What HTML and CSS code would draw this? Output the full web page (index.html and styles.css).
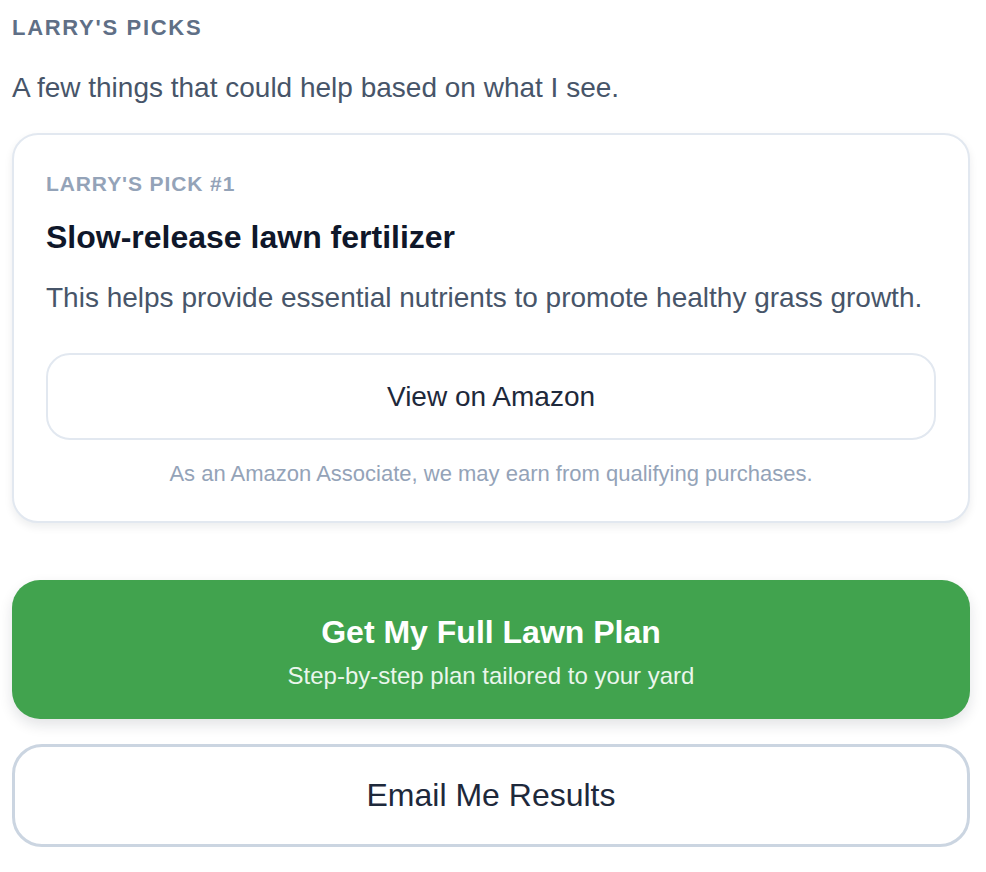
FILE: index.html
```html
<!DOCTYPE html>
<html lang="en">
<head>
<meta charset="utf-8">
<title>Larry's Picks</title>
<link rel="stylesheet" href="styles.css">
</head>
<body>
<main class="page">
  <h2 class="section-label">LARRY'S PICKS</h2>
  <p class="intro">A few things that could help based on what I see.</p>

  <section class="pick-card">
    <div class="pick-label">LARRY'S PICK #1</div>
    <h3 class="pick-title">Slow-release lawn fertilizer</h3>
    <p class="pick-desc">This helps provide essential nutrients to promote healthy grass growth.</p>
    <a class="amazon-btn" href="#">View on Amazon</a>
    <p class="disclaimer">As an Amazon Associate, we may earn from qualifying purchases.</p>
  </section>

  <a class="plan-btn" href="#">
    <span class="plan-title">Get My Full Lawn Plan</span>
    <span class="plan-sub">Step-by-step plan tailored to your yard</span>
  </a>

  <a class="email-btn" href="#">Email Me Results</a>
</main>
</body>
</html>
```

FILE: styles.css
```css
* { box-sizing: border-box; }

html, body {
  margin: 0;
  padding: 0;
  background: #ffffff;
}

body {
  font-family: "Liberation Sans", Arial, Helvetica, sans-serif;
  color: #1e293b;
}

.page {
  display: flex;
  flex-direction: column;
  padding: 14px 16px 20px 12px;
}

.section-label {
  margin: 0;
  font-size: 22px;
  line-height: 28px;
  font-weight: 700;
  letter-spacing: 1.7px;
  color: #5f6f86;
}

.intro {
  margin: 28px 0 0 0;
  font-size: 28px;
  line-height: 36px;
  color: #475569;
}

.pick-card {
  margin-top: 27px;
  border: 2px solid #e2e8f0;
  border-radius: 26px;
  background: #fff;
  box-shadow: 0 4px 8px rgba(15, 23, 42, 0.08);
  padding: 35px 32px 33px 32px;
  display: flex;
  flex-direction: column;
}

.pick-label {
  font-size: 21px;
  line-height: 28px;
  font-weight: 700;
  letter-spacing: 0.9px;
  color: #94a3b8;
}

.pick-title {
  margin: 19px 0 0 0;
  font-size: 32px;
  line-height: 40px;
  font-weight: 700;
  color: #0f172a;
}

.pick-desc {
  margin: 23px 0 0 0;
  font-size: 28px;
  line-height: 36px;
  color: #475569;
}

.amazon-btn {
  margin-top: 37px;
  height: 87px;
  border: 2px solid #e2e8f0;
  border-radius: 24px;
  display: flex;
  align-items: center;
  justify-content: center;
  font-size: 28px;
  color: #1e293b;
  text-decoration: none;
}

.disclaimer {
  margin: 20px 0 0 0;
  text-align: center;
  font-size: 22px;
  line-height: 28px;
  color: #94a3b8;
}

.plan-btn {
  margin-top: 57px;
  padding: 32px 0 28px 0;
  border-radius: 28px;
  background: #41a34e;
  box-shadow: 0 6px 14px rgba(15, 23, 42, 0.12);
  display: flex;
  flex-direction: column;
  align-items: center;
  gap: 9px;
  text-decoration: none;
  color: #fff;
}

.plan-title {
  font-size: 32px;
  line-height: 40px;
  font-weight: 700;
}

.plan-sub {
  font-size: 24px;
  line-height: 30px;
  color: #eaf6ec;
}

.email-btn {
  margin-top: 25px;
  height: 103px;
  border: 3px solid #cbd5e1;
  border-radius: 30px;
  display: flex;
  align-items: center;
  justify-content: center;
  font-size: 32px;
  color: #1e293b;
  text-decoration: none;
}
```
